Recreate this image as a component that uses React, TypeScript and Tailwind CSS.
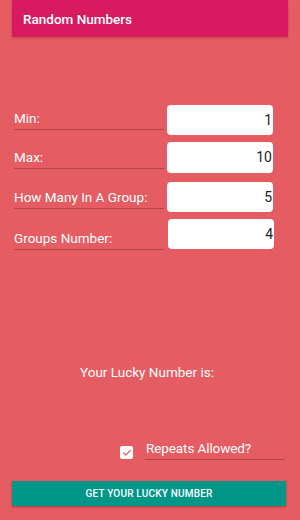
import { Check } from 'lucide-react';

const rows = [
  { label: 'Min:', value: '1', top: 'mt-[68px]', lab: 'mb-[5px]', box: 'h-[30px] ml-[3px]' },
  { label: 'Max:', value: '10', top: 'mt-[7px]', lab: 'mb-[4px]', box: 'h-[31px] ml-[3px]' },
  { label: 'How Many In A Group:', value: '5', top: 'mt-[9px]', lab: 'mb-[3px]', box: 'h-[30px] ml-[3px]' },
  { label: 'Groups Number:', value: '4', top: 'mt-[7px]', lab: 'mb-0', box: 'h-[30px] ml-[4px] mb-[1px]' },
];

export default function App() {
  return (
    <div className="relative h-[520px] w-[300px] overflow-hidden bg-[#e55c62] font-['Roboto',sans-serif]">
      {/* Toolbar */}
      <div className="mx-[12px] flex h-[37px] items-center bg-[#d81b60] px-[11px] shadow-[0_1px_2px_rgba(0,0,0,0.2)]">
        <span className="pt-[1px] text-[13.5px] font-medium text-white">Random Numbers</span>
      </div>

      {/* Inputs */}
      {rows.map((r) => (
        <div key={r.label} className={`flex items-end ${r.top}`}>
          <div
            className={`ml-[14px] w-[150px] border-b border-[#b3434a] pb-[2px] text-[13.5px] leading-[18px] text-white ${r.lab}`}
          >
            {r.label}
          </div>
          <div
            className={`${r.box} flex w-[106px] items-center justify-end rounded-[4px] bg-white pr-[1px] text-[14px] text-[#222]`}
          >
            {r.value}
          </div>
        </div>
      ))}

      {/* Result */}
      <div className="mt-[112px] pr-[6px] text-center text-[13.5px] leading-[20px] text-white">
        Your Lucky Number is:
      </div>

      {/* Repeats */}
      <div className="mt-[57px] flex items-end">
        <div className="mb-[1px] ml-[120px] flex h-[13px] w-[13px] items-center justify-center rounded-[2px] bg-white">
          <Check className="h-[10px] w-[10px] text-[#e55c62]" strokeWidth={3} />
        </div>
        <div className="ml-[12px] w-[140px] border-b border-[#b3434a] pb-[2px] pl-[1px] text-[13.5px] leading-[18px] tracking-[-0.1px] text-white">
          Repeats Allowed?
        </div>
      </div>

      {/* Button */}
      <div className="mx-[12px] mt-[21px] flex h-[25px] w-[274px] items-center justify-center bg-[#009688] shadow-[0_1px_2px_rgba(0,0,0,0.3)]">
        <span className="text-[10px] font-medium tracking-[0.2px] text-white">GET YOUR LUCKY NUMBER</span>
      </div>
    </div>
  );
}
